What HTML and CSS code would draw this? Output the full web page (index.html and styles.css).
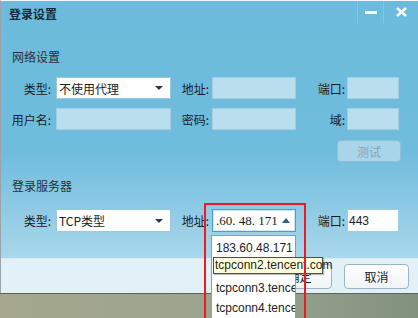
FILE: index.html
```html
<!DOCTYPE html>
<html>
<head>
    <title>登录设置</title>
    <link rel="stylesheet" href="styles.css">
</head>
<body>
    <div class="window">
        <div class="titlebar">
            <span class="title">登录设置</span>
            <div class="controls">
                <span class="ctl min"><svg width="12" height="3"><rect width="12" height="3" fill="#fff"/></svg></span>
                <span class="ctl close"><svg width="11" height="10" viewBox="0 0 11 10"><path d="M1 1 L10 9 M10 1 L1 9" stroke="#fff" stroke-width="2.4"/></svg></span>
            </div>
        </div>

        <div class="heading first">网络设置</div>
        <div class="form-grid">
            <label>类型:</label>
            <div class="select"><span>不使用代理</span><i class="down"></i></div>
            <label>地址:</label>
            <div class="input off"></div>
            <label>端口:</label>
            <div class="input off"></div>

            <label>用户名:</label>
            <div class="input off"></div>
            <label>密码:</label>
            <div class="input off"></div>
            <label>域:</label>
            <div class="input off"></div>
        </div>
        <div class="test-row"><button class="btn-test">测试</button></div>

        <div class="heading second">登录服务器</div>
        <div class="form-grid server">
            <label>类型:</label>
            <div class="select"><span>TCP类型</span><i class="down"></i></div>
            <label>地址:</label>
            <div class="combo"><span>.60. 48. 171</span><i class="up"></i></div>
            <label>端口:</label>
            <div class="input on">443</div>
        </div>

        <div class="spacer"></div>
        <div class="footer">
            <button class="btn">确定</button>
            <button class="btn">取消</button>
        </div>
    </div>
    <div class="desktop"></div>

    <!-- second item is hidden under the hover tooltip -->
    <ul class="droplist">
        <li>183.60.48.171</li>
        <li></li>
        <li>tcpconn3.tence</li>
        <li>tcpconn4.tence</li>
    </ul>
    <div class="tooltip">tcpconn2.tencent.com</div>
    <div class="mark"></div>
</body>
</html>
```

FILE: styles.css
```css
body { margin: 0; width: 418px; height: 318px; overflow: hidden; position: relative; font-family: "Noto Sans CJK SC", "Liberation Sans", sans-serif; font-size: 12px; color: #1b1b1b; background: #9ea58c; }
.window { height: 292px; display: flex; flex-direction: column; border-top: 1px solid #f4f8fa; border-left: 1px solid #9aa3a8; background: linear-gradient(to bottom, #6dbbdc 0px, #6fbcdd 150px, #a9d7eb 257px); }
.titlebar { height: 26px; display: flex; align-items: center; justify-content: space-between; padding-left: 8px; }
.title { font-weight: bold; font-size: 12px; color: #1c2a33; line-height: 16px; }
.controls { display: flex; align-self: stretch; height: 22px; }
.ctl { display: flex; align-items: center; justify-content: center; border-left: 1px solid #86c6e2; }
.min { width: 25px; }
.close { width: 34px; }
.heading { padding-left: 11px; line-height: 16px; color: #2a2f33; font-size: 12px; }
.heading.first { margin-top: 22px; }
.heading.second { margin-top: 16px; }
.form-grid { display: grid; grid-template-columns: 55px 115px 41px 84px 51px 52px; grid-auto-rows: 22px; row-gap: 9px; margin-top: 12px; }
.form-grid.server { grid-auto-rows: 23px; margin-top: 15px; }
.form-grid label { display: flex; align-items: center; justify-content: flex-end; padding-right: 5px; white-space: nowrap; }
.form-grid label:nth-child(6n+3) { padding-right: 3px; }
.form-grid label:nth-child(6n+5) { padding-right: 2px; }
.select { background: #fff; border: 1px solid #9cc8dc; display: flex; align-items: center; justify-content: space-between; padding: 0 7px 0 2px; }
.down { width: 0; height: 0; border-left: 4px solid transparent; border-right: 4px solid transparent; border-top: 4px solid #2b3a46; }
.up { width: 0; height: 0; border-left: 4px solid transparent; border-right: 4px solid transparent; border-bottom: 5px solid #2f5f86; flex: none; }
.input { border: 1px solid #a2cee2; }
.input.off { background: #b9deee; }
.input.on { background: #fff; display: flex; align-items: center; padding-left: 1px; font-family: "Liberation Sans", sans-serif; font-size: 12px; }
.combo { background: #fff; border: 1px solid #4e9bd3; box-shadow: inset 0 0 0 1px #d3e8f6; display: flex; align-items: center; justify-content: space-between; padding: 0 5px 0 3px; font-family: "Liberation Serif", serif; font-size: 13px; white-space: nowrap; overflow: hidden; }
.test-row { display: flex; justify-content: flex-end; padding-right: 17px; margin-top: 10px; }
.btn-test { width: 64px; height: 22px; border: 1px solid #8fc0d6; border-radius: 4px; background: #a9d5ea; color: #8aa4b2; font-family: inherit; font-size: 12px; padding: 0; }
.spacer { flex: 1; }
.footer { height: 34px; background: #e2f1f8; border-top: 1px solid #d6ebf5; display: flex; justify-content: flex-end; align-items: center; gap: 12px; padding-right: 9px; }
.btn { width: 65px; height: 25px; border: 1px solid #9ab4c2; border-radius: 4px; background: linear-gradient(#ffffff, #eef4f7); font-family: inherit; font-size: 12px; color: #1b1b1b; padding: 0; }
.desktop { height: 25px; border-top: 1px solid #5d645a; background: linear-gradient(to right, #a5a88e, #9aa48d 60%, #82917e); }
.droplist { position: absolute; left: 211px; top: 235px; width: 83px; height: 83px; margin: 0; padding: 0; list-style: none; background: #fff; border: 1px solid #6ca6d6; border-bottom: none; font-family: "Liberation Sans", sans-serif; font-size: 12px; overflow: hidden; }
.droplist li { height: 20px; line-height: 20px; padding-left: 4px; white-space: nowrap; color: #222; }
.droplist li:first-child { margin-top: 2px; }
.tooltip { position: absolute; left: 213px; top: 257px; width: 110px; height: 17px; box-sizing: border-box; border: 1px solid #4d4d40; background: #ffffde; font-family: "Liberation Sans", sans-serif; font-size: 12px; line-height: 15px; padding-left: 1px; color: #222; box-shadow: 1px 1px 1px rgba(0,0,0,0.25); white-space: nowrap; }
.mark { position: absolute; left: 204px; top: 203px; width: 98px; height: 115px; border: 2px solid #ec1a22; border-bottom: none; }
```
